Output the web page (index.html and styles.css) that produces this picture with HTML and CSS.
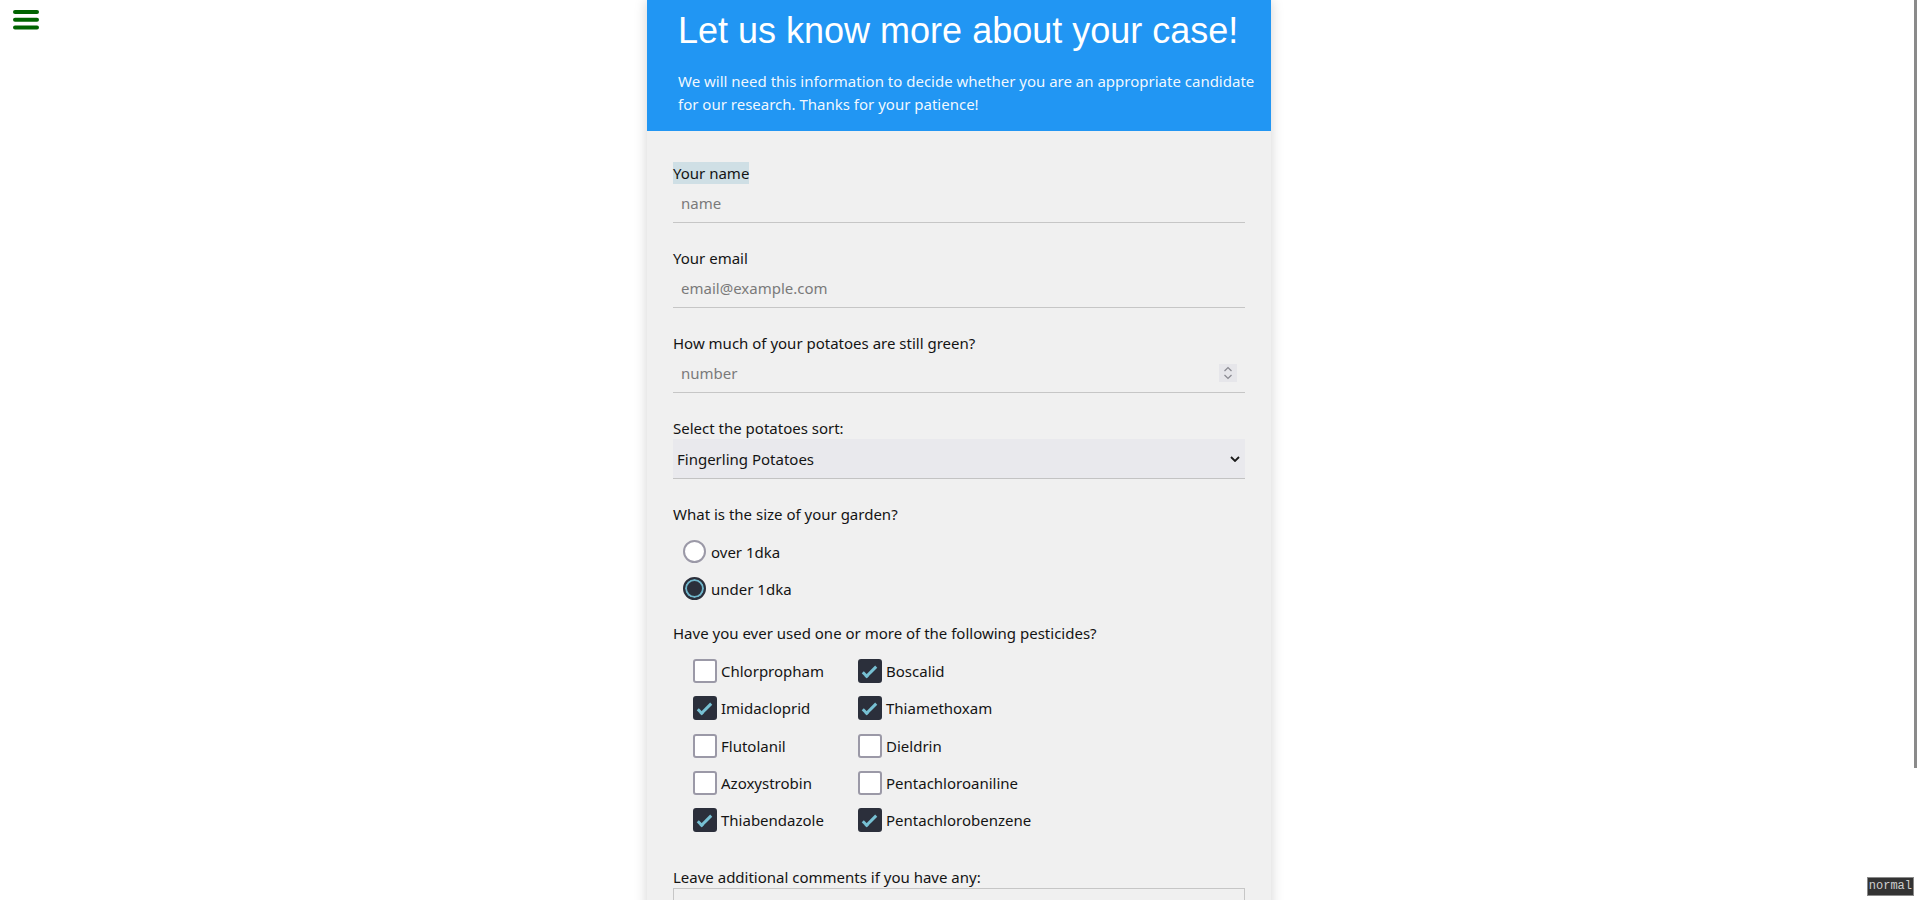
FILE: index.html
```html
<!DOCTYPE html>
<html lang="en">
<head>
<meta charset="utf-8">
<title>Let us know more about your case!</title>
<link rel="stylesheet" href="styles.css">
</head>
<body>
<button class="menu-btn" type="button" aria-label="Menu">
  <svg width="26" height="20" viewBox="0 0 26 20"><g stroke="#006400" stroke-width="4" stroke-linecap="round"><line x1="2" y1="2" x2="24" y2="2"/><line x1="2" y1="9.7" x2="24" y2="9.7"/><line x1="2" y1="17.5" x2="24" y2="17.5"/></g></svg>
</button>

<main class="card">
  <header class="card-head">
    <h1 class="card-title">Let us know more about your case!</h1>
    <p class="card-intro">We will need this information to decide whether you are an appropriate candidate for our research. Thanks for your patience!</p>
  </header>

  <form class="card-body">
    <div class="field">
      <label class="lbl lbl-hl" for="f-name">Your name</label>
      <input class="text-input" id="f-name" type="text" placeholder="name">
    </div>

    <div class="field">
      <label class="lbl" for="f-email">Your email</label>
      <input class="text-input" id="f-email" type="email" placeholder="email@example.com">
    </div>

    <div class="field">
      <label class="lbl" for="f-num">How much of your potatoes are still green?</label>
      <div class="num-wrap">
        <input class="num-input" id="f-num" type="text" placeholder="number">
        <span class="spinner"><svg width="18" height="18" viewBox="0 0 18 18"><g fill="none" stroke="#8a8a92" stroke-width="1.3"><polyline points="5.5,7 9,3.6 12.5,7"/><polyline points="5.5,11 9,14.4 12.5,11"/></g></svg></span>
      </div>
    </div>

    <div class="field">
      <label class="lbl" for="f-sort">Select the potatoes sort:</label>
      <div class="select-wrap">
        <select class="select" id="f-sort">
          <option>Fingerling Potatoes</option>
          <option>Russet Potatoes</option>
          <option>Red Potatoes</option>
        </select>
        <svg class="chev" width="10" height="6" viewBox="0 0 10 6"><polyline points="1,1 5,5 9,1" fill="none" stroke="#1a1a1a" stroke-width="1.8"/></svg>
      </div>
    </div>

    <div class="field field-radio">
      <span class="lbl">What is the size of your garden?</span>
      <div class="radio-list">
        <label class="opt opt-radio"><input class="radio" type="radio" name="garden">over 1dka</label>
        <label class="opt opt-radio"><input class="radio" type="radio" name="garden" checked>under 1dka</label>
      </div>
    </div>

    <div class="field field-check">
      <span class="lbl">Have you ever used one or more of the following pesticides?</span>
      <div class="check-grid">
        <label class="opt"><input class="check" type="checkbox">Chlorpropham</label>
        <label class="opt"><input class="check" type="checkbox" checked>Boscalid</label>
        <label class="opt"><input class="check" type="checkbox" checked>Imidacloprid</label>
        <label class="opt"><input class="check" type="checkbox" checked>Thiamethoxam</label>
        <label class="opt"><input class="check" type="checkbox">Flutolanil</label>
        <label class="opt"><input class="check" type="checkbox">Dieldrin</label>
        <label class="opt"><input class="check" type="checkbox">Azoxystrobin</label>
        <label class="opt"><input class="check" type="checkbox">Pentachloroaniline</label>
        <label class="opt"><input class="check" type="checkbox" checked>Thiabendazole</label>
        <label class="opt"><input class="check" type="checkbox" checked>Pentachlorobenzene</label>
      </div>
    </div>

    <div class="field">
      <label class="lbl" for="f-comments">Leave additional comments if you have any:</label>
      <textarea class="textarea" id="f-comments" rows="6"></textarea>
    </div>
  </form>
</main>

<div class="scroll-thumb"></div>
<div class="mode-badge">normal</div>
</body>
</html>
```

FILE: styles.css
```css
html {
  height: 100%;
  overflow: hidden;
}

body {
  margin: 0;
  padding-right: 1px;
  background: #ffffff;
  font-family: "Noto Sans", "Open Sans", sans-serif;
  font-size: 15px;
  color: #1a1a1a;
}

.menu-btn {
  position: fixed;
  left: 13px;
  top: 10px;
  padding: 0;
  margin: 0;
  border: none;
  background: none;
  line-height: 0;
  cursor: pointer;
}

.card {
  width: 624px;
  margin: 0 auto;
  background: #f0f0f0;
  box-shadow: 0 0 12px rgba(0, 0, 0, 0.18);
  min-height: 1060px;
}

.card-head {
  background: #2196f3;
  color: #ffffff;
  padding: 10px 12px 15px 31px;
}

.card-title {
  margin: 0;
  font-family: "Liberation Sans", Arial, sans-serif;
  font-weight: normal;
  font-size: 36px;
  line-height: 42px;
}

.card-intro {
  margin: 18px 0 0;
  font-size: 15px;
  line-height: 23px;
  color: rgba(255, 255, 255, 0.94);
}

.card-body {
  padding: 31px 26px 0;
}

.field {
  margin-bottom: 24px;
}

.lbl {
  display: inline-block;
  vertical-align: top;
  line-height: 22px;
  color: #141414;
}

.lbl-hl {
  background: #cfdfe5;
}

.text-input,
.num-input {
  display: block;
  box-sizing: border-box;
  width: 100%;
  height: 39px;
  margin: 0;
  padding: 0 8px;
  border: none;
  border-bottom: 1px solid #c6c6c6;
  background: transparent;
  font-family: "Noto Sans", "Open Sans", sans-serif;
  font-size: 15px;
  color: #1a1a1a;
  outline: none;
}

.text-input::placeholder,
.num-input::placeholder {
  color: #7a7a7a;
}

.num-wrap {
  display: flex;
  align-items: center;
  box-sizing: border-box;
  height: 39px;
  border-bottom: 1px solid #c6c6c6;
  padding-right: 8px;
}

.num-wrap .num-input {
  flex: 1;
  height: 38px;
  border-bottom: none;
}

.spinner {
  flex-shrink: 0;
  width: 18px;
  height: 18px;
  background: #e6e6ea;
  line-height: 0;
}

.select-wrap {
  display: flex;
  align-items: center;
  box-sizing: border-box;
  height: 40px;
  background: #e9e9ed;
  border-bottom: 1px solid #c3c3c3;
  padding-right: 5px;
}

.select {
  flex: 1;
  appearance: none;
  -webkit-appearance: none;
  height: 39px;
  margin: 0;
  padding: 0 4px;
  border: none;
  background: transparent;
  font-family: "Noto Sans", "Open Sans", sans-serif;
  font-size: 15px;
  color: #141414;
  outline: none;
}

.chev {
  display: block;
  flex-shrink: 0;
}

.field-radio {
  margin-bottom: 22px;
}

.radio-list {
  display: flex;
  flex-direction: column;
  gap: 14px;
  margin-top: 15px;
  padding-left: 10px;
}

.opt {
  display: flex;
  align-items: center;
  gap: 4px;
  line-height: 22px;
  color: #141414;
  white-space: nowrap;
}

.opt-radio {
  gap: 5px;
}

.radio {
  flex-shrink: 0;
  appearance: none;
  -webkit-appearance: none;
  box-sizing: border-box;
  width: 23px;
  height: 23px;
  margin: 0;
  border: 2px solid #9b99a7;
  border-radius: 50%;
  background: #ffffff;
}

.radio:checked {
  border-color: #2b2f3b;
  background: #2b2f3b;
  box-shadow: inset 0 0 0 2px #70b6cb;
}

.field-check {
  margin-bottom: 34px;
}

.check-grid {
  display: grid;
  grid-template-columns: 165px auto;
  justify-content: start;
  row-gap: 13.3px;
  margin-top: 15px;
  padding-left: 20px;
}

.check {
  flex-shrink: 0;
  appearance: none;
  -webkit-appearance: none;
  position: relative;
  box-sizing: border-box;
  width: 24px;
  height: 24px;
  margin: 0;
  border: 2px solid #9b99a7;
  border-radius: 3px;
  background: #ffffff;
}

.check:checked {
  border-color: #2b2f3b;
  background: #2b2f3b;
}

.check:checked::after {
  content: "";
  position: absolute;
  left: 6px;
  top: 2px;
  box-sizing: border-box;
  width: 7px;
  height: 15px;
  border: solid #77c0d3;
  border-width: 0 3px 3px 0;
  transform: rotate(45deg);
}

.textarea {
  display: block;
  box-sizing: border-box;
  width: 100%;
  height: 120px;
  margin: 0;
  border: 1px solid #c6c6c6;
  background: #f0f0f0;
  font-family: "Noto Sans", "Open Sans", sans-serif;
  font-size: 15px;
  resize: vertical;
}

.scroll-thumb {
  position: fixed;
  top: 0;
  right: 2px;
  width: 3px;
  height: 768px;
  background: #8a8a8a;
}

.mode-badge {
  position: fixed;
  right: 5px;
  bottom: 4px;
  padding: 1px 1px;
  border: 1px solid #8a8a8a;
  background: #333333;
  color: #cfcfcf;
  font-family: "Liberation Mono", "DejaVu Sans Mono", monospace;
  font-size: 12px;
  line-height: 15px;
}
```
